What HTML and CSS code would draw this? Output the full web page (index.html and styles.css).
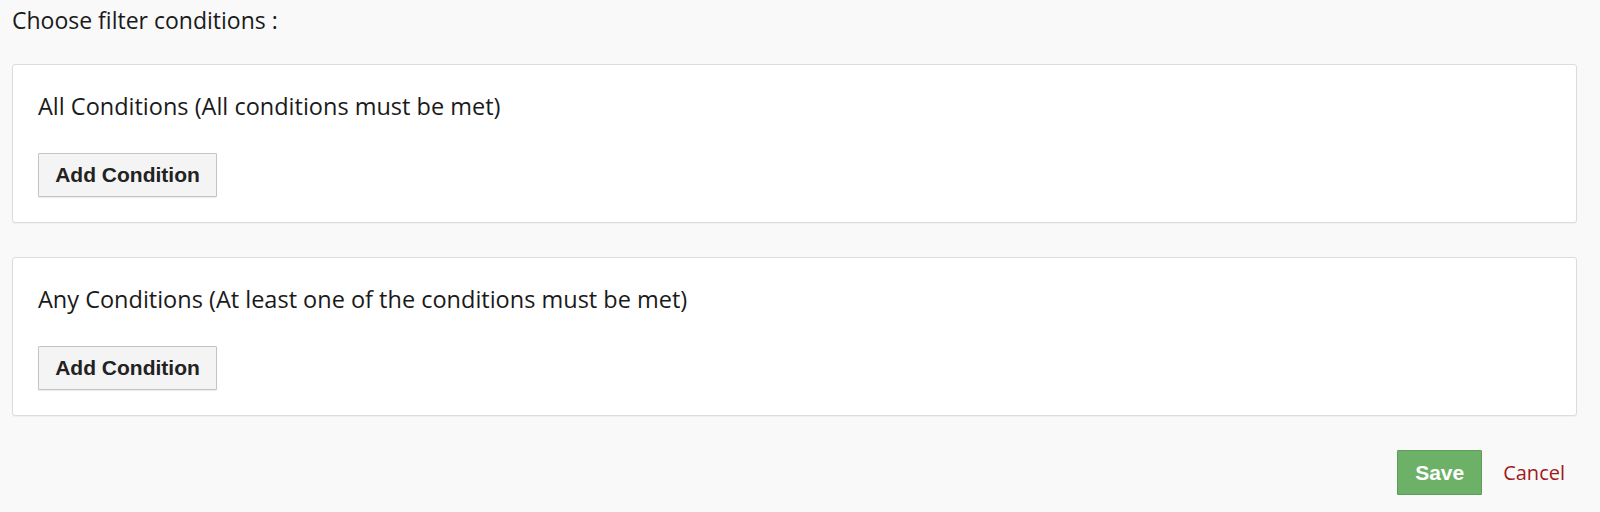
FILE: index.html
```html
<!DOCTYPE html>
<html lang="en">

<head>
    <meta charset="UTF-8">
    <meta name="viewport" content="width=device-width, initial-scale=1.0">
    <title>Filter conditions</title>
    <link rel="stylesheet" href="styles.css">
</head>

<body>
    <div class="page">
        <p class="intro">Choose filter conditions :</p>

        <div class="group">
            <div class="group-title">All Conditions (All conditions must be met)</div>
            <button class="add-btn" type="button">Add Condition</button>
        </div>

        <div class="group">
            <div class="group-title">Any Conditions (At least one of the conditions must be met)</div>
            <button class="add-btn" type="button">Add Condition</button>
        </div>

        <div class="actions">
            <button class="save-btn" type="button">Save</button>
            <a class="cancel-link" href="#">Cancel</a>
        </div>
    </div>
</body>

</html>
```

FILE: styles.css
```css
body {
    margin: 0;
    background: #f9f9f9;
    font-family: "Open Sans", "Noto Sans", sans-serif;
    color: #1a1a1a;
}

.page {
    padding: 8px 23px 0 12px;
}

.intro {
    margin: 0 0 31px;
    font-size: 23px;
    line-height: 25px;
}

.group {
    background: #fff;
    border: 1px solid #dcdcdc;
    border-radius: 3px;
    box-shadow: 0 1px 1px rgba(0, 0, 0, 0.04);
    padding: 26px 25px 25px;
    margin-bottom: 34px;
}

.group-title {
    font-size: 23.5px;
    line-height: 30px;
    margin-bottom: 32px;
}

.add-btn {
    display: block;
    font-family: "Liberation Sans", Arial, sans-serif;
    font-weight: bold;
    font-size: 21px;
    line-height: 20px;
    white-space: nowrap;
    color: #222;
    background: #f4f4f4;
    border: 1px solid #c4c4c4;
    border-radius: 1px;
    box-shadow: 0 1px 1px rgba(0, 0, 0, 0.08);
    padding: 0;
    width: 179px;
    height: 44px;
    cursor: pointer;
}

.actions {
    display: flex;
    justify-content: flex-end;
    align-items: center;
    gap: 21px;
    padding-right: 12px;
}

.save-btn {
    font-family: "Liberation Sans", Arial, sans-serif;
    font-weight: bold;
    font-size: 21px;
    line-height: 20px;
    white-space: nowrap;
    color: #fff;
    background: #6db168;
    border: 1px solid #5c9f58;
    border-radius: 1px;
    box-shadow: 0 1px 1px rgba(0, 0, 0, 0.1);
    padding: 0;
    width: 85px;
    height: 45px;
    cursor: pointer;
}

.cancel-link {
    color: #a11a1a;
    font-size: 20px;
    text-decoration: none;
}
```
